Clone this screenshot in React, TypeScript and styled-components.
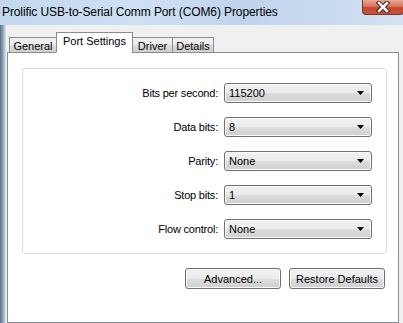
import React from 'react';
import styled, { createGlobalStyle } from 'styled-components';

const GlobalStyle = createGlobalStyle`
  html, body { margin: 0; padding: 0; }
  body {
    font-family: "Liberation Sans", Arial, sans-serif;
    font-size: 11px;
    color: #000;
  }
`;

const Window = styled.div`
  width: 403px;
  height: 323px;
  overflow: hidden;
  display: flex;
  flex-direction: column;
  background: #f0f0f0;
`;

const TitleBar = styled.div`
  height: 25px;
  flex: none;
  display: flex;
  justify-content: space-between;
  align-items: flex-start;
  background: linear-gradient(100deg, #c2d7ef 0%, #cfe0f3 35%, #bfd4ed 60%, #d3e2f3 100%);
`;

const Title = styled.div`
  padding: 5px 0 0 2px;
  font-size: 12px;
  letter-spacing: -0.1px;
  white-space: nowrap;
`;

const CloseButton = styled.div`
  width: 42px;
  height: 15px;
  margin-right: -1px;
  box-sizing: border-box;
  border: 1px solid #7b3327;
  border-top: none;
  border-radius: 0 0 4px 4px;
  background: linear-gradient(to bottom, #e6a897 0%, #d8755f 45%, #c6452d 55%, #c9553c 100%);
  display: flex;
  align-items: center;
  justify-content: center;
`;

const Body = styled.div`
  flex: 1;
  display: flex;
  min-height: 0;
`;

const Frame = styled.div`
  width: 6px;
  flex: none;
  background: linear-gradient(to right, #5f6f84 0%, #8499b0 40%, #bccbdb 80%, #dfe7f0 100%);
`;

const Client = styled.div`
  flex: 1;
  display: flex;
  flex-direction: column;
  padding: 7px 4px 0 1px;
`;

const TabStrip = styled.div`
  display: flex;
  align-items: flex-end;
  height: 21px;
  padding-left: 2px;
  margin-bottom: -1px;
  position: relative;
  z-index: 1;
`;

const Tab = styled.div<{ $active?: boolean; $w: number }>`
  width: ${p => p.$w}px;
  height: ${p => (p.$active ? 21 : 16)}px;
  box-sizing: border-box;
  border: 1px solid #898c95;
  border-bottom-color: ${p => (p.$active ? '#fff' : '#898c95')};
  margin-left: -1px;
  background: ${p =>
    p.$active ? '#fff' : 'linear-gradient(to bottom, #f2f2f2 0%, #ebebeb 50%, #dddddd 51%, #cfcfcf 100%)'};
  display: flex;
  align-items: center;
  justify-content: center;
  padding-top: ${p => (p.$active ? 0 : 1)}px;
  padding-bottom: ${p => (p.$active ? 3 : 0)}px;
  white-space: nowrap;
  &:first-child { margin-left: 0; }
`;

const Panel = styled.div`
  flex: 1;
  background: #fff;
  border: 1px solid #898c95;
  padding: 15px 11px 0 14px;
`;

const Group = styled.div`
  border: 1px solid #d5dfe5;
  border-radius: 3px;
  padding: 14px 14px 14px 0;
  display: grid;
  grid-template-columns: 1fr 148px;
  column-gap: 6px;
  row-gap: 14px;
  align-items: center;
`;

const Label = styled.div`
  text-align: right;
  letter-spacing: -0.2px;
  white-space: nowrap;
`;

const Select = styled.div`
  height: 20px;
  box-sizing: border-box;
  border: 1px solid #707070;
  border-radius: 3px;
  background: linear-gradient(to bottom, #f2f2f2 0%, #ebebeb 50%, #dddddd 51%, #cfcfcf 100%);
  box-shadow: inset 0 0 0 1px #fbfbfb;
  display: flex;
  align-items: center;
  justify-content: space-between;
  padding: 0 7px 0 4px;
`;

const Buttons = styled.div`
  display: flex;
  justify-content: flex-end;
  gap: 8px;
  margin: 14px 2px 0 0;
`;

const Button = styled.div`
  width: 96px;
  height: 21px;
  box-sizing: border-box;
  border: 1px solid #707070;
  border-radius: 3px;
  background: linear-gradient(to bottom, #f2f2f2 0%, #ebebeb 50%, #dddddd 51%, #cfcfcf 100%);
  box-shadow: inset 0 0 0 1px #fbfbfb;
  display: flex;
  align-items: center;
  justify-content: center;
`;

const Arrow = () => (
  <svg width="7" height="4" viewBox="0 0 7 4">
    <path d="M0 0 H7 L3.5 4 Z" fill="#000" />
  </svg>
);

const CloseX = () => (
  <svg width="16" height="12" viewBox="0 0 16 12">
    <path d="M4 2 L12 10 M12 2 L4 10" stroke="#4a1a12" strokeWidth="4.5" strokeLinecap="square" />
    <path d="M4 2 L12 10 M12 2 L4 10" stroke="#fff" strokeWidth="2.5" strokeLinecap="square" />
  </svg>
);

const fields: [string, string][] = [
  ['Bits per second:', '115200'],
  ['Data bits:', '8'],
  ['Parity:', 'None'],
  ['Stop bits:', '1'],
  ['Flow control:', 'None'],
];

const tabs: [string, number][] = [
  ['General', 48],
  ['Port Settings', 77],
  ['Driver', 41],
  ['Details', 42],
];

export default function App() {
  return (
    <>
      <GlobalStyle />
      <Window>
        <TitleBar>
          <Title>Prolific USB-to-Serial Comm Port (COM6) Properties</Title>
          <CloseButton>
            <CloseX />
          </CloseButton>
        </TitleBar>
        <Body>
          <Frame />
          <Client>
            <TabStrip>
              {tabs.map(([name, w]) => (
                <Tab key={name} $w={w} $active={name === 'Port Settings'}>
                  {name}
                </Tab>
              ))}
            </TabStrip>
            <Panel>
              <Group>
                {fields.map(([label, value]) => (
                  <React.Fragment key={label}>
                    <Label>{label}</Label>
                    <Select>
                      <span>{value}</span>
                      <Arrow />
                    </Select>
                  </React.Fragment>
                ))}
              </Group>
              <Buttons>
                <Button>Advanced...</Button>
                <Button>Restore Defaults</Button>
              </Buttons>
            </Panel>
          </Client>
        </Body>
      </Window>
    </>
  );
}
